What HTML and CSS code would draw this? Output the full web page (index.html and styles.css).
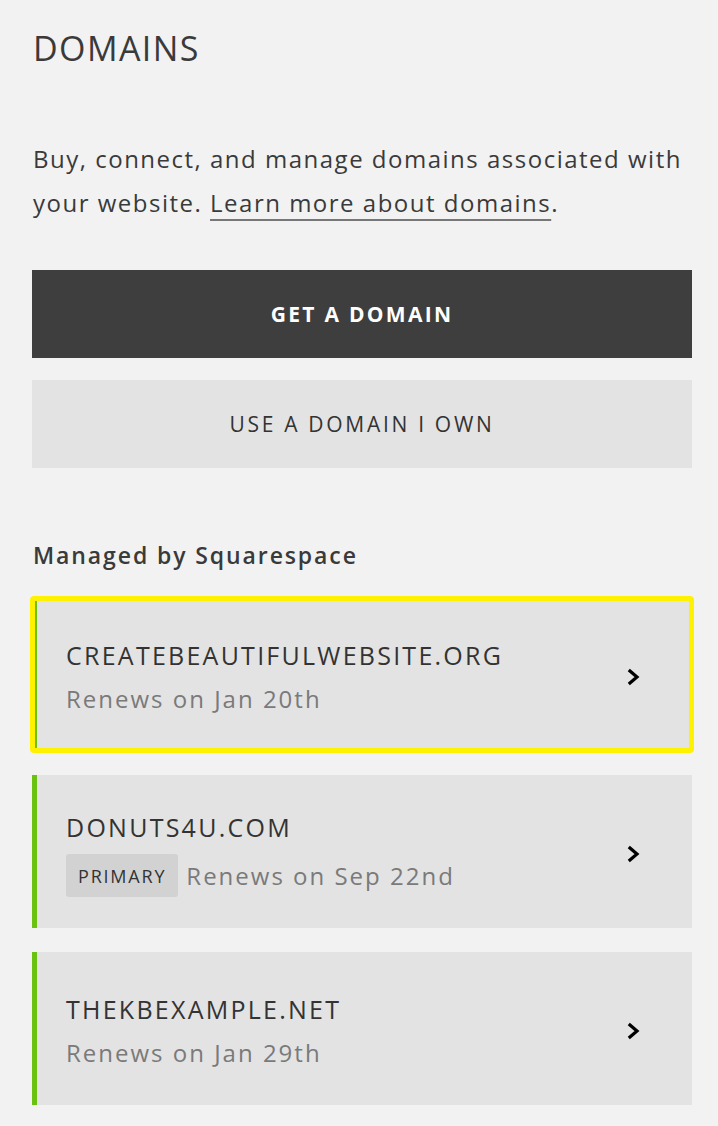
FILE: index.html
```html
<!DOCTYPE html>
<html lang="en">
<head>
<meta charset="utf-8">
<title>Domains</title>
<link rel="stylesheet" href="styles.css">
</head>
<body>
<main class="panel">
  <h1 class="title">DOMAINS</h1>
  <p class="intro">Buy, connect, and manage domains associated with your website. <a class="link" href="#">Learn more about domains</a>.</p>
  <div class="actions">
    <button class="btn btn-dark">GET A DOMAIN</button>
    <button class="btn btn-light">USE A DOMAIN I OWN</button>
  </div>
  <h2 class="section">Managed by Squarespace</h2>
  <ul class="domains">
    <li class="domain is-focused">
      <div class="info">
        <div class="name">CREATEBEAUTIFULWEBSITE.ORG</div>
        <div class="meta"><span class="renew">Renews on Jan 20th</span></div>
      </div>
      <svg class="chev" width="14" height="18" viewBox="0 0 14 18"><path d="M3 3 L10 9 L3 15" fill="none" stroke="#000" stroke-width="3.2" stroke-linecap="square"/></svg>
    </li>
    <li class="domain">
      <div class="info">
        <div class="name">DONUTS4U.COM</div>
        <div class="meta"><span class="badge">PRIMARY</span><span class="renew">Renews on Sep 22nd</span></div>
      </div>
      <svg class="chev" width="14" height="18" viewBox="0 0 14 18"><path d="M3 3 L10 9 L3 15" fill="none" stroke="#000" stroke-width="3.2" stroke-linecap="square"/></svg>
    </li>
    <li class="domain">
      <div class="info">
        <div class="name">THEKBEXAMPLE.NET</div>
        <div class="meta"><span class="renew">Renews on Jan 29th</span></div>
      </div>
      <svg class="chev" width="14" height="18" viewBox="0 0 14 18"><path d="M3 3 L10 9 L3 15" fill="none" stroke="#000" stroke-width="3.2" stroke-linecap="square"/></svg>
    </li>
  </ul>
</main>
</body>
</html>
```
FILE: styles.css
```css
* { box-sizing: border-box; }
html, body { margin: 0; padding: 0; }
body {
  background: #f2f2f2;
  font-family: "Open Sans", "Noto Sans", sans-serif;
  color: #3a3a3a;
}
.panel {
  padding: 28px 26px 20px 32px;
}
.title {
  margin: 0 0 0 1px;
  font-size: 34px;
  line-height: 40px;
  font-weight: 500;
  letter-spacing: 1.4px;
  color: #3a3a3a;
}
.intro {
  margin: 69px 0 0 1px;
  font-size: 24px;
  line-height: 44px;
  letter-spacing: 1.5px;
  color: #3a3a3a;
}
.link {
  color: #3a3a3a;
  text-decoration: underline;
  text-decoration-color: #777;
  text-decoration-thickness: 2px;
  text-underline-offset: 7px;
}
.actions {
  display: flex;
  flex-direction: column;
  gap: 22px;
  margin-top: 45px;
}
.btn {
  display: block;
  width: 100%;
  height: 88px;
  border: 0;
  font-family: inherit;
  font-size: 21px;
  cursor: pointer;
}
.btn-dark {
  background: #3e3e3e;
  color: #fff;
  font-weight: 700;
  letter-spacing: 2.3px;
}
.btn-light {
  background: #e3e3e3;
  color: #333;
  font-weight: 500;
  letter-spacing: 2.7px;
}
.section {
  margin: 72px 0 0 1px;
  font-size: 23px;
  line-height: 30px;
  font-weight: 600;
  letter-spacing: 1.9px;
  color: #3a3a3a;
}
.domains {
  list-style: none;
  margin: 28px 0 0;
  padding: 0;
  display: flex;
  flex-direction: column;
  gap: 24px;
}
.domain {
  position: relative;
  display: flex;
  align-items: center;
  justify-content: space-between;
  height: 153px;
  background: #e3e3e3;
  border-left: 5px solid #6ac10f;
  padding: 0 51px 0 29px;
}
.domain.is-focused {
  outline: 5px solid #fff200;
  outline-offset: -3px;
  border-radius: 2px;
}
.info {
  display: flex;
  flex-direction: column;
  gap: 12px;
  margin-top: 6px;
}
.name {
  font-size: 25px;
  line-height: 30px;
  font-weight: 500;
  letter-spacing: 2.25px;
  color: #333;
}
.meta {
  display: flex;
  align-items: center;
  gap: 8px;
}
.renew {
  font-size: 24px;
  line-height: 34px;
  letter-spacing: 2px;
  color: #7a7a7a;
}
.badge {
  display: inline-flex;
  align-items: center;
  height: 43px;
  padding: 0 12px;
  background: #d2d2d2;
  border-radius: 3px;
  font-size: 18px;
  font-weight: 500;
  letter-spacing: 1.8px;
  color: #333;
}
.chev { display: block; margin-top: 5px; }
```
